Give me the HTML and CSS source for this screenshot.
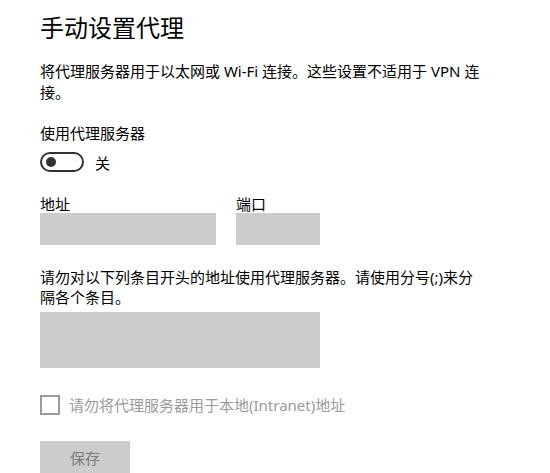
FILE: index.html
```html
<!DOCTYPE html>
<html lang="zh-CN">
	<head>
		<meta charset="UTF-8" />
		<meta name="viewport" content="width=device-width, initial-scale=1.0" />
		<title>手动设置代理</title>
		<link rel="stylesheet" href="styles.css">
	</head>

	<body>
		<div class="proxy-page">
			<h1 class="title">手动设置代理</h1>
			<p class="desc">将代理服务器用于以太网或 Wi-Fi 连接。这些设置不适用于 VPN 连接。</p>

			<div class="label">使用代理服务器</div>
			<div class="toggle-row">
				<div class="toggle"><div class="knob"></div></div>
				<span>关</span>
			</div>

			<div class="fields">
				<div class="field">
					<div class="field-label">地址</div>
					<div class="input address"></div>
				</div>
				<div class="field">
					<div class="field-label">端口</div>
					<div class="input port"></div>
				</div>
			</div>

			<p class="exceptions">请勿对以下列条目开头的地址使用代理服务器。请使用分号(;)来分隔各个条目。</p>
			<div class="input textarea"></div>

			<div class="check-row">
				<div class="checkbox"></div>
				<span>请勿将代理服务器用于本地(Intranet)地址</span>
			</div>

			<div class="save-btn">保存</div>
		</div>
	</body>
</html>
```

FILE: styles.css
```css
:root {
	--text-color: #000;
	--field-bg: #ccc;
	--disabled-text: #9a9a9a;
	--button-text: #7a7a7a;
	--toggle-border: #333;
}

body {
	margin: 0;
	background: #fff;
	color: var(--text-color);
	font-family: "Noto Sans", "Noto Sans CJK SC", sans-serif;
	font-size: 15px;
}

.proxy-page {
	padding: 12px 40px 0;
	width: 445px;
}

.title {
	margin: 0;
	font-size: 24px;
	font-weight: normal;
	line-height: 32px;
}

.desc {
	margin: 17px 0 0;
	line-height: 21px;
}

.label {
	margin-top: 20px;
	line-height: 21px;
}

.toggle-row {
	display: flex;
	align-items: center;
	gap: 11px;
	margin-top: 8px;
	height: 20px;
}

.toggle {
	box-sizing: border-box;
	width: 44px;
	height: 20px;
	border: 2px solid var(--toggle-border);
	border-radius: 10px;
	display: flex;
	align-items: center;
	padding-left: 4px;
}

.knob {
	width: 10px;
	height: 10px;
	border-radius: 50%;
	background: var(--toggle-border);
}

.fields {
	display: flex;
	gap: 20px;
	margin-top: 23px;
}

.field-label {
	line-height: 18px;
}

.input {
	background: var(--field-bg);
	height: 32px;
}

.address {
	width: 176px;
}

.port {
	width: 84px;
}

.exceptions {
	margin: 22px 0 0;
	line-height: 20px;
}

.textarea {
	width: 280px;
	height: 56px;
	margin-top: 5px;
}

.check-row {
	display: flex;
	align-items: center;
	gap: 9px;
	margin-top: 26px;
	color: var(--disabled-text);
}

.checkbox {
	box-sizing: border-box;
	width: 20px;
	height: 20px;
	border: 2px solid var(--disabled-text);
}

.save-btn {
	margin-top: 26px;
	width: 90px;
	height: 32px;
	background: var(--field-bg);
	color: var(--button-text);
	display: flex;
	align-items: center;
	justify-content: center;
}
```
